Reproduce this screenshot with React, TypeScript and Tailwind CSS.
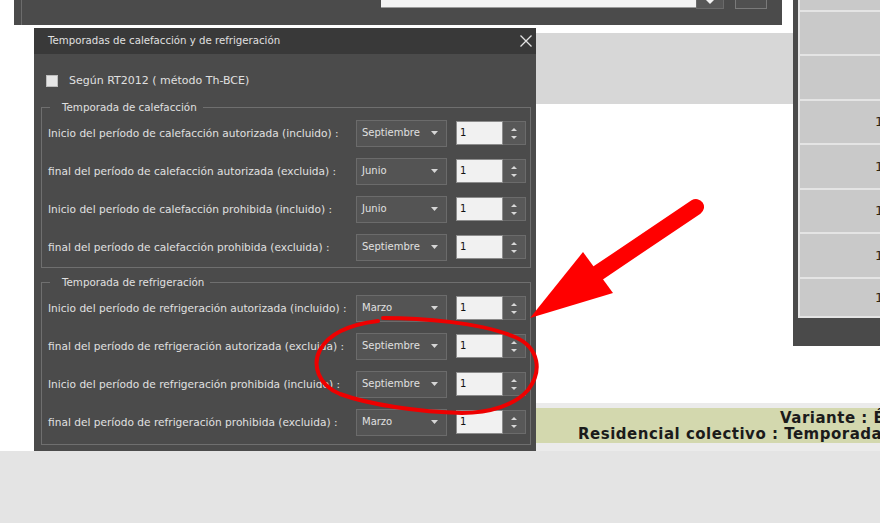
import type { ReactNode } from "react";

/* Collage of a desktop app: a settings panel behind, the "Temporadas" dialog on top,
   a table frame at the right edge, a status band, and a red hand-drawn annotation. */

type Row = { label: string; month: string };

const heating: Row[] = [
  { label: "Inicio del período de calefacción autorizada (incluido) :", month: "Septiembre" },
  { label: "final del período de calefacción autorizada (excluida) :", month: "Junio" },
  { label: "Inicio del período de calefacción prohibida (incluido) :", month: "Junio" },
  { label: "final del período de calefacción prohibida (excluida) :", month: "Septiembre" },
];

const cooling: Row[] = [
  { label: "Inicio del período de refrigeración autorizada (incluido) :", month: "Marzo" },
  { label: "final del período de refrigeración autorizada (excluida) :", month: "Septiembre" },
  { label: "Inicio del período de refrigeración prohibida (incluido) :", month: "Septiembre" },
  { label: "final del período de refrigeración prohibida (excluida) :", month: "Marzo" },
];

// heights of the table cells at the right edge; the last five show a "1"
const cells = [10, 42, 43, 42, 43, 42, 43, 37];

function Caret() {
  return (
    <svg width="7" height="4" viewBox="0 0 7 4">
      <path d="M0 0h7L3.5 4z" fill="#d6d6d6" />
    </svg>
  );
}

function Spin() {
  return (
    <div className="ml-[9px] flex h-[24px]">
      <div className="flex w-[47px] items-center border border-[#8c8c8c] bg-[#f1f1f1] pl-[3px] text-[#111]">1</div>
      <div className="flex w-[23px] flex-col items-center justify-center gap-[5px] border border-l-0 border-[#6b6b6b] bg-[#585858]">
        <svg width="6" height="3" viewBox="0 0 6 3">
          <path d="M0 3h6L3 0z" fill="#d8d8d8" />
        </svg>
        <svg width="6" height="3" viewBox="0 0 6 3">
          <path d="M0 0h6L3 3z" fill="#d8d8d8" />
        </svg>
      </div>
    </div>
  );
}

function Group({ title, rows, className }: { title: string; rows: Row[]; className: string }) {
  return (
    <fieldset className={`ml-[7px] mr-[5px] border border-[#6f6f6f] ${className}`}>
      <legend className="ml-[8px] pl-[12px] pr-[6px] text-[10.3px]">{title}</legend>
      {rows.map((r) => (
        <div key={r.label} className="flex h-[38px] items-center pl-[6px]">
          <span className="w-[308px] shrink-0 whitespace-nowrap text-[10.6px]">{r.label}</span>
          <div className="flex h-[27px] w-[91px] items-center justify-between border border-[#6b6b6b] bg-[#545454] pl-[5px] pr-[8px]">
            <span>{r.month}</span>
            <Caret />
          </div>
          <Spin />
        </div>
      ))}
    </fieldset>
  );
}

function Dialog({ children }: { children: ReactNode }) {
  return (
    <div className="absolute left-[34px] top-[28px] flex h-[423px] w-[502px] flex-col overflow-hidden bg-[#4b4b4b] text-[10px] leading-[14px] text-[#e0e0e0]">
      <div className="flex h-[26px] shrink-0 items-center justify-between bg-[#393939] pl-[14px] pr-[4px]">
        <span className="text-[10.2px]">Temporadas de calefacción y de refrigeración</span>
        <svg width="12" height="12" viewBox="0 0 12 12">
          <path d="M0.5 0.5l11 11M11.5 0.5l-11 11" stroke="#e4e4e4" strokeWidth="1.3" />
        </svg>
      </div>
      {children}
    </div>
  );
}

export default function App() {
  return (
    <div className="flex h-[523px] w-[880px] flex-col overflow-hidden bg-white font-['DejaVu_Sans',sans-serif]">
      <div className="relative h-[451px] shrink-0">
        {/* settings panel behind */}
        <div className="absolute left-[14px] top-0 flex h-[25px] w-[768px] bg-[#4b4b4b] pl-[7px] pr-[15px]">
          <div className="h-full w-px bg-[#6c6c6c]" />
          <div className="ml-auto flex items-start">
            <div className="h-[8px] w-[315px] border-b border-[#9a9a9a] bg-[#f3f3f3]" />
            <div className="flex h-[9px] w-[28px] justify-center border border-t-0 border-[#6a6a6a] bg-[#575757]">
              <svg width="8" height="4" viewBox="0 0 8 4">
                <path d="M0 0h8L4 4z" fill="#f2f2f2" />
              </svg>
            </div>
            <div className="ml-[11px] h-[9px] w-[32px] border border-t-0 border-[#7a7a7a] bg-[#505050]" />
          </div>
        </div>

        <div className="absolute left-[536px] top-[33px] h-[71px] w-[257px] bg-[#d7d7d7]" />

        {/* table frame on the right */}
        <div className="absolute left-[793px] top-0 h-[346px] w-[87px] bg-[#4a4a4a] pl-[5px]">
          <div className="flex flex-col gap-[2px] bg-[#e4e4e4] pb-[2px] pl-[2px]">
            {cells.map((h, i) => (
              <div
                key={i}
                className="flex items-center overflow-hidden bg-[#c9c9c9] pl-[75px] text-[13px] text-[#2e2410]"
                style={{ height: h }}
              >
                {i >= 3 ? "1" : ""}
              </div>
            ))}
          </div>
        </div>

        {/* status band */}
        <div className="absolute left-[536px] top-[403px] h-[48px] w-[344px] bg-[#ebebeb] pt-[5px]">
          <div className="h-[35px] overflow-hidden whitespace-nowrap bg-[#d3d8ae] pt-[2px] text-[15px] font-bold leading-[16px] tracking-[0.5px] text-[#1b1b1b]">
            <div className="pl-[244px]">Variante : É</div>
            <div className="pl-[42px]">Residencial colectivo : Temporada</div>
          </div>
        </div>

        <Dialog>
          <label className="ml-[12px] mt-[20px] flex h-[14px] items-center gap-[11px] text-[11px]">
            <span className="size-[12px] border border-[#bdbdbd] bg-[#e6e6e6]" />
            Según RT2012 ( método Th-BCE)
          </label>
          <Group title="Temporada de calefacción" rows={heating} className="mt-[12px] pb-[1px]" />
          <Group title="Temporada de refrigeración" rows={cooling} className="mt-[7px] pb-[3px]" />
        </Dialog>

        {/* red annotation */}
        <svg className="pointer-events-none absolute left-0 top-0" width="880" height="451" viewBox="0 0 880 451">
          <path
            d="M383 318C420 318 480 322 515 337C540 348 542 372 528 390C515 405 490 413 462 413C420 412 370 405 340 394C318 385 312 365 320 350C328 335 345 325 378 321"
            fill="none"
            stroke="#ee0000"
            strokeWidth="4"
            strokeLinecap="round"
          />
          <path d="M696 207L598 273" stroke="#ff0000" strokeWidth="16" strokeLinecap="round" />
          <path d="M530 318L583 252L613 293z" fill="#ff0000" />
        </svg>
      </div>
      <div className="flex-1 bg-[#e4e4e4]" />
    </div>
  );
}
